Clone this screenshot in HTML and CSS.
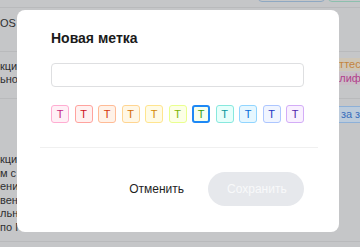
FILE: index.html
```html
<!DOCTYPE html>
<html lang="ru">
<head>
  <meta charset="UTF-8">
  <title>Новая метка</title>
  <link rel="stylesheet" href="styles.css">
</head>
<body>
  <div class="page">
    <div class="toolbar">
      <span class="tool tool-blue"></span>
      <span class="tool tool-green"></span>
    </div>
    <div class="row row-first">
      <div class="cell-left">OS</div>
    </div>
    <div class="row row-second">
      <div class="cell-left">кция<br>ьно</div>
      <div class="cell-right">
        <span class="tag tag-orange">Аттестация</span>
        <span class="tag tag-pink">Квалификация</span>
      </div>
    </div>
    <div class="row row-third">
      <div class="cell-left">кция<br>м с<br>ения<br>вен<br>льн<br>по П</div>
      <div class="cell-right">
        <span class="tag tag-blue">Оплата за заказ</span>
      </div>
    </div>
  </div>

  <div class="modal">
    <div class="modal-body">
      <h3 class="modal-title">Новая метка</h3>
      <input class="modal-input" type="text">
      <div class="swatches">
        <span class="swatch magenta">Т</span>
        <span class="swatch red">Т</span>
        <span class="swatch volcano">Т</span>
        <span class="swatch orange">Т</span>
        <span class="swatch gold">Т</span>
        <span class="swatch lime">Т</span>
        <span class="swatch green selected">Т</span>
        <span class="swatch cyan">Т</span>
        <span class="swatch blue">Т</span>
        <span class="swatch geekblue">Т</span>
        <span class="swatch purple">Т</span>
      </div>
    </div>
    <hr class="modal-divider">
    <div class="modal-footer">
      <button class="btn btn-cancel">Отменить</button>
      <button class="btn btn-save" disabled>Сохранить</button>
    </div>
  </div>
</body>
</html>
```

FILE: styles.css
```css
body {
  margin: 0;
  width: 360px;
  height: 247px;
  overflow: hidden;
  background: #c5c6c8;
  font-family: "Liberation Sans", Arial, sans-serif;
}
.page {
  color: #2e2f31;
  font-size: 11px;
}
.toolbar {
  height: 7px;
  border-bottom: 1px solid #b9babc;
  display: flex;
  justify-content: flex-end;
  gap: 3px;
}
.tool {
  display: block;
  height: 20px;
  margin-top: -18px;
  border-radius: 4px;
  box-sizing: border-box;
}
.tool-blue {
  width: 67px;
  border: 1px solid #8ea8c2;
}
.tool-green {
  width: 40px;
  margin-right: -8px;
  border: 1px solid #8dbfae;
}
.row {
  display: flex;
  justify-content: space-between;
  align-items: flex-start;
  border-bottom: 1px solid #b9babc;
  box-sizing: border-box;
}
.row-first {
  height: 44px;
  padding-top: 9px;
}
.row-second {
  height: 47px;
  padding-top: 6px;
  line-height: 13px;
}
.row-third {
  height: 143px;
  padding-top: 7px;
  line-height: 13.6px;
}
.cell-left {
  white-space: nowrap;
}
.row-second .cell-left {
  padding-top: 2px;
}
.row-third .cell-left {
  padding-top: 47px;
}
.cell-right {
  display: flex;
  flex-direction: column;
  align-items: flex-start;
  gap: 1px;
  margin-right: -60px;
  width: 90px;
}
.tag {
  display: block;
  font-size: 11px;
  line-height: 13px;
  padding: 0 3px;
  border-radius: 2px;
  white-space: nowrap;
}
.tag-orange {
  margin-left: -1px;
  color: #c4843e;
  background: #cfc6b6;
}
.tag-pink {
  margin-left: -12px;
  color: #b2408c;
  background: #c9bec6;
}
.tag-blue {
  margin-left: -34px;
  line-height: 15px;
  color: #3a6fbb;
  background: #bccbdb;
  border: 1px solid #8db0d8;
}

.modal {
  position: absolute;
  left: 17px;
  top: 10px;
  width: 322px;
  height: 222px;
  background: #fff;
  border-radius: 8px;
  box-sizing: border-box;
}
.modal-body {
  padding: 18px 35px 0 34px;
}
.modal-title {
  margin: 0;
  font-size: 14px;
  line-height: 20px;
  font-weight: bold;
  color: #1a1a1a;
}
.modal-input {
  display: block;
  margin-top: 15px;
  width: 100%;
  height: 24px;
  box-sizing: border-box;
  border: 1px solid #dedfe1;
  border-radius: 4px;
  outline: none;
}
.swatches {
  margin-top: 18px;
  display: flex;
  justify-content: space-between;
}
.swatch {
  width: 18px;
  height: 18px;
  box-sizing: border-box;
  border: 1px solid;
  border-radius: 3px;
  display: flex;
  align-items: center;
  justify-content: center;
  font-size: 11px;
}
.magenta { background: #fff0f6; border-color: #ffadd2; color: #c41d7f; }
.red { background: #fff1f0; border-color: #ffa39e; color: #cf1322; }
.volcano { background: #fff2e8; border-color: #ffbb96; color: #d4380d; }
.orange { background: #fff7e6; border-color: #ffd591; color: #d46b08; }
.gold { background: #fffbe6; border-color: #ffe58f; color: #d48806; }
.lime { background: #fcffe6; border-color: #eaff8f; color: #7cb305; }
.green { background: #f6ffed; border-color: #b7eb8f; color: #389e0d; }
.cyan { background: #e6fffb; border-color: #87e8de; color: #08979c; }
.blue { background: #e6f7ff; border-color: #91d5ff; color: #096dd9; }
.geekblue { background: #f0f5ff; border-color: #adc6ff; color: #1d39c4; }
.purple { background: #f9f0ff; border-color: #d3adf7; color: #531dab; }
.swatch.selected {
  border: 2px solid #1e88f5;
}
.modal-divider {
  margin: 24px 21px 0 23px;
  border: 0;
  border-top: 1px solid #f0f0f0;
}
.modal-footer {
  display: flex;
  justify-content: flex-end;
  gap: 5px;
  padding: 24px 35px 0 0;
}
.btn {
  height: 34px;
  border: 0;
  border-radius: 17px;
  font-family: "Liberation Sans", Arial, sans-serif;
  font-size: 12px;
  padding: 0 19px;
  background: transparent;
}
.btn-cancel {
  color: #1f1f1f;
}
.btn-save {
  width: 96px;
  background: #e6e8ec;
  color: #f8f9fa;
}
```
